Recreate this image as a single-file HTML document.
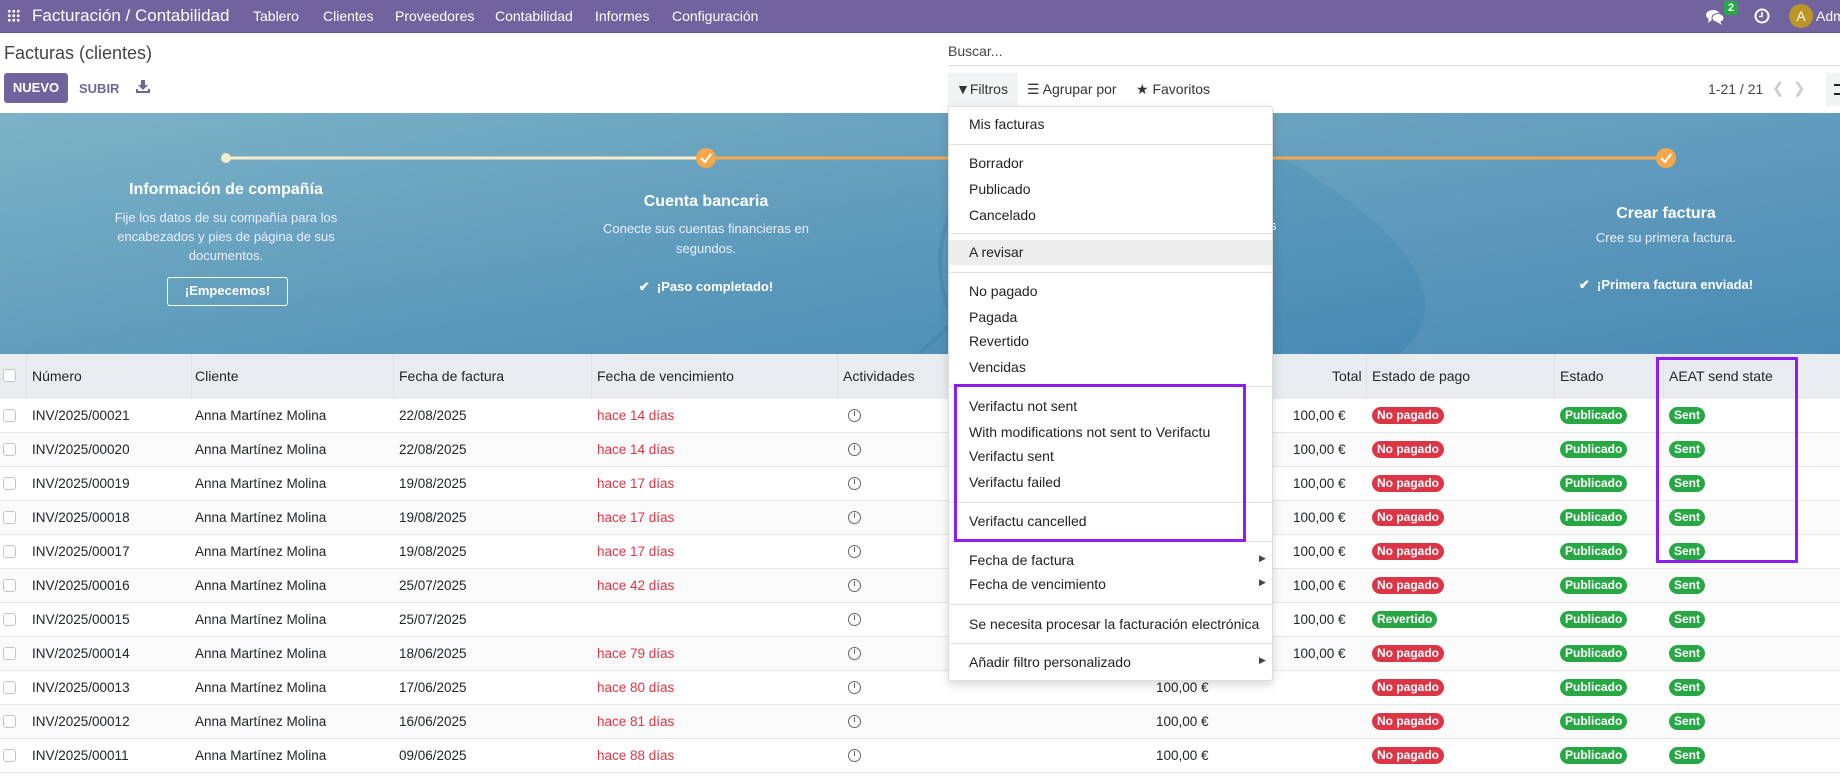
<!DOCTYPE html>
<html><head><meta charset="utf-8">
<style>
*{box-sizing:border-box;margin:0;padding:0}
body{width:1840px;height:776px;overflow:hidden;font-family:"Liberation Sans",sans-serif;font-size:14px;color:#212529;background:#fff;position:relative}
.abs{position:absolute;white-space:nowrap}
.nav{position:absolute;left:0;top:0;width:1840px;height:33px;background:#71639e;border-bottom:1px solid #5f5289;color:#fff}
.nav .abs{top:8px;font-size:14px}
.banner{position:absolute;left:0;top:113px;width:1840px;height:241px;background:linear-gradient(170deg,#7cb2c6 0%,#5f9cbc 45%,#3f84b0 100%);overflow:hidden;color:#fff}
.thead{position:absolute;left:0;top:354px;width:1840px;height:45px;background:#e9ecef}
.th{position:absolute;top:14px;font-size:14px}
.sep{position:absolute;top:0;width:1px;height:45px;background:#dee2e6}
.row{position:absolute;left:0;width:1840px;height:34px;border-bottom:1px solid #e5e5e5;font-size:13.5px}
.row .abs{top:9px}
.cb{position:absolute;left:3px;width:13px;height:13px;border:1px solid #c4c4c4;border-radius:3px;background:#fff}
.badge{position:absolute;top:8px;height:17px;line-height:17px;border-radius:9px;color:#fff;font-weight:bold;font-size:12px;padding:0 5px}
.red{background:#dc3545}.green{background:#28a745}
.clock{position:absolute;top:10px;left:848px;width:13px;height:13px;border:1.5px solid #666;border-radius:50%}
.clock:after{content:"";position:absolute;left:4.5px;top:1px;width:1.5px;height:5px;background:#666}
.dd{position:absolute;left:948px;top:106px;width:325px;height:575px;background:#fff;border:1px solid #ddd;border-radius:3px;box-shadow:0 4px 10px rgba(0,0,0,.15)}
.di{position:absolute;left:20px;font-size:14px;color:#222}
.ds{position:absolute;left:0;width:323px;height:1px;background:#e3e3e3}
.box{position:absolute;border:3px solid #8f1cf0}
</style></head><body>
<div class="nav">
 <div class="abs" style="left:7px;top:9px;width:13px;height:13px;background:
 radial-gradient(circle,#fff 1.3px,transparent 1.6px) 0 0/4.5px 4.5px"></div>
 <div class="abs" style="left:32px;top:6px;font-size:17px">Facturación / Contabilidad</div>
 <div class="abs" style="left:253px">Tablero</div>
 <div class="abs" style="left:323px">Clientes</div>
 <div class="abs" style="left:395px">Proveedores</div>
 <div class="abs" style="left:495px">Contabilidad</div>
 <div class="abs" style="left:595px">Informes</div>
 <div class="abs" style="left:672px">Configuración</div>
 <svg class="abs" style="left:1705px;top:8px" width="20" height="18" viewBox="0 0 20 18"><ellipse cx="8" cy="7" rx="7" ry="5" fill="#fff"/><path d="M4 10 L3 15 L8 11Z" fill="#fff"/><ellipse cx="13" cy="10" rx="6" ry="4.5" fill="#fff" stroke="#71639e" stroke-width="1"/><path d="M15 13 L17 17 L12 14Z" fill="#fff"/></svg>
 <div class="abs" style="left:1724px;top:1px;background:#28a745;font-size:11px;font-weight:bold;padding:1px 4px;border-radius:2px">2</div>
 <svg class="abs" style="left:1753px;top:7px" width="18" height="18" viewBox="0 0 18 18"><circle cx="9" cy="9" r="6.5" fill="none" stroke="#fff" stroke-width="2"/><path d="M9 5v4.5H6" fill="none" stroke="#fff" stroke-width="1.6"/></svg>
 <div class="abs" style="left:1789px;top:4px;width:24px;height:24px;border-radius:50%;background:#bb9626;text-align:center;line-height:24px;font-size:14px">A</div>
 <div class="abs" style="left:1816px">Adm</div>
</div>
<div class="abs" style="left:4px;top:43px;font-size:18px;color:#444">Facturas (clientes)</div>
<div class="abs" style="left:4px;top:73px;width:64px;height:30px;background:#71639e;border-radius:3px;color:#fff;font-size:13px;font-weight:bold;text-align:center;line-height:30px">NUEVO</div>
<div class="abs" style="left:79px;top:81px;font-size:13px;font-weight:bold;color:#71639e">SUBIR</div>
<svg class="abs" style="left:136px;top:80px" width="14" height="13" viewBox="0 0 14 13"><path d="M5 0h4v5h3l-5 5-5-5h3z" fill="#71639e"/><path d="M1 9v3h12V9" fill="none" stroke="#71639e" stroke-width="2"/></svg>
<div class="abs" style="left:948px;top:43px;font-size:14px;color:#444">Buscar...</div>
<div class="abs" style="left:948px;top:65px;width:892px;height:1px;background:#ddd"></div>
<div class="abs" style="left:948px;top:73px;width:70px;height:33px;background:#f2f3f5"></div>
<div class="abs" style="left:956px;top:81px;font-size:14px;color:#333">&#9660;Filtros</div>
<div class="abs" style="left:1027px;top:81px;font-size:14px;color:#333">&#9776; Agrupar por</div>
<div class="abs" style="left:1136px;top:81px;font-size:14px;color:#333">&#9733; Favoritos</div>
<div class="abs" style="left:1708px;top:81px;font-size:14px;color:#444">1-21 / 21</div>
<div class="abs" style="left:1772px;top:79px;font-size:15px;color:#ccc">&#10094;&nbsp;&nbsp;&#10095;</div>
<div class="abs" style="left:1826px;top:73px;width:14px;height:33px;background:#f2f3f5"></div>
<div class="abs" style="left:1834px;top:84px;width:6px;height:11px;border-top:2px solid #222;border-bottom:2px solid #222"></div>

<div class="banner">
 <svg class="abs" style="left:0;top:0" width="1840" height="241">
  <g fill="none" stroke="#2f6a8c" stroke-opacity=".2" stroke-width="4">
   <ellipse cx="1010" cy="150" rx="70" ry="95"/><ellipse cx="1120" cy="40" rx="80" ry="80"/>
   <path d="M1180 -10 Q1050 120 920 240"/></g>
  <path d="M1200 0 Q1500 150 1400 241 L1840 241 L1840 0Z" fill="#fff" fill-opacity=".06"/>
  <line x1="226" y1="45" x2="706" y2="45" stroke="#f5eccc" stroke-width="3"/>
  <line x1="706" y1="45" x2="1666" y2="45" stroke="#f4a84b" stroke-width="3"/>
  <circle cx="226" cy="45" r="5" fill="#f5eccc"/>
  <circle cx="706" cy="45" r="10" fill="#f4a84b"/><circle cx="1666" cy="45" r="10" fill="#f4a84b"/>
  <path d="M701 45l4 4 6-8M1661 45l4 4 6-8" stroke="#fff" stroke-width="2" fill="none"/>
 </svg>
 <div class="abs" style="left:76px;top:68px;width:300px;text-align:center;font-size:16px;font-weight:bold">Información de compañía</div>
 <div class="abs" style="left:96px;top:95px;width:260px;white-space:normal;text-align:center;font-size:13px;line-height:19px;color:#eef">Fije los datos de su compañía para los encabezados y pies de página de sus documentos.</div>
 <div class="abs" style="left:167px;top:164px;width:121px;height:29px;border:1.5px solid #fff;border-radius:3px;text-align:center;line-height:26px;font-size:13px;font-weight:bold">¡Empecemos!</div>
 <div class="abs" style="left:556px;top:80px;width:300px;text-align:center;font-size:16px;font-weight:bold">Cuenta bancaria</div>
 <div class="abs" style="left:586px;top:106px;width:240px;white-space:normal;text-align:center;font-size:13px;line-height:20px;color:#eef">Conecte sus cuentas financieras en segundos.</div>
 <div class="abs" style="left:556px;top:166px;width:300px;text-align:center;font-size:13px;font-weight:bold">&#10004;&nbsp; ¡Paso completado!</div>
 <div class="abs" style="left:1270px;top:105px;font-size:13px">s</div>
 <div class="abs" style="left:1516px;top:92px;width:300px;text-align:center;font-size:16px;font-weight:bold">Crear factura</div>
 <div class="abs" style="left:1516px;top:117px;width:300px;text-align:center;font-size:13px;color:#eef">Cree su primera factura.</div>
 <div class="abs" style="left:1516px;top:164px;width:300px;text-align:center;font-size:13px;font-weight:bold">&#10004;&nbsp; ¡Primera factura enviada!</div>
</div>

<div class="thead">
 <div class="cb" style="top:15px"></div>
 <div class="sep" style="left:26px"></div><div class="sep" style="left:191px"></div><div class="sep" style="left:393px"></div><div class="sep" style="left:591px"></div><div class="sep" style="left:837px"></div><div class="sep" style="left:1366px"></div><div class="sep" style="left:1554px"></div><div class="sep" style="left:1663px"></div>
 <div class="th" style="left:32px">Número</div><div class="th" style="left:195px">Cliente</div><div class="th" style="left:399px">Fecha de factura</div><div class="th" style="left:597px">Fecha de vencimiento</div><div class="th" style="left:843px">Actividades</div><div class="th" style="left:1332px">Total</div><div class="th" style="left:1372px">Estado de pago</div><div class="th" style="left:1560px">Estado</div><div class="th" style="left:1669px">AEAT send state</div>
</div>

<div class="row" style="top:399px"><div class="cb" style="top:10px"></div><div class="abs" style="left:32px">INV/2025/00021</div><div class="abs" style="left:195px">Anna Martínez Molina</div><div class="abs" style="left:399px">22/08/2025</div><div class="abs" style="left:597px;color:#dc3545">hace 14 días</div><div class="clock"></div><div class="abs" style="left:1293px">100,00 €</div><div class="badge red" style="left:1372px">No pagado</div><div class="badge green" style="left:1560px">Publicado</div><div class="badge green" style="left:1669px">Sent</div></div>
<div class="row" style="top:433px;background:#fafafa"><div class="cb" style="top:10px"></div><div class="abs" style="left:32px">INV/2025/00020</div><div class="abs" style="left:195px">Anna Martínez Molina</div><div class="abs" style="left:399px">22/08/2025</div><div class="abs" style="left:597px;color:#dc3545">hace 14 días</div><div class="clock"></div><div class="abs" style="left:1293px">100,00 €</div><div class="badge red" style="left:1372px">No pagado</div><div class="badge green" style="left:1560px">Publicado</div><div class="badge green" style="left:1669px">Sent</div></div>
<div class="row" style="top:467px"><div class="cb" style="top:10px"></div><div class="abs" style="left:32px">INV/2025/00019</div><div class="abs" style="left:195px">Anna Martínez Molina</div><div class="abs" style="left:399px">19/08/2025</div><div class="abs" style="left:597px;color:#dc3545">hace 17 días</div><div class="clock"></div><div class="abs" style="left:1293px">100,00 €</div><div class="badge red" style="left:1372px">No pagado</div><div class="badge green" style="left:1560px">Publicado</div><div class="badge green" style="left:1669px">Sent</div></div>
<div class="row" style="top:501px;background:#fafafa"><div class="cb" style="top:10px"></div><div class="abs" style="left:32px">INV/2025/00018</div><div class="abs" style="left:195px">Anna Martínez Molina</div><div class="abs" style="left:399px">19/08/2025</div><div class="abs" style="left:597px;color:#dc3545">hace 17 días</div><div class="clock"></div><div class="abs" style="left:1293px">100,00 €</div><div class="badge red" style="left:1372px">No pagado</div><div class="badge green" style="left:1560px">Publicado</div><div class="badge green" style="left:1669px">Sent</div></div>
<div class="row" style="top:535px"><div class="cb" style="top:10px"></div><div class="abs" style="left:32px">INV/2025/00017</div><div class="abs" style="left:195px">Anna Martínez Molina</div><div class="abs" style="left:399px">19/08/2025</div><div class="abs" style="left:597px;color:#dc3545">hace 17 días</div><div class="clock"></div><div class="abs" style="left:1293px">100,00 €</div><div class="badge red" style="left:1372px">No pagado</div><div class="badge green" style="left:1560px">Publicado</div><div class="badge green" style="left:1669px">Sent</div></div>
<div class="row" style="top:569px;background:#fafafa"><div class="cb" style="top:10px"></div><div class="abs" style="left:32px">INV/2025/00016</div><div class="abs" style="left:195px">Anna Martínez Molina</div><div class="abs" style="left:399px">25/07/2025</div><div class="abs" style="left:597px;color:#dc3545">hace 42 días</div><div class="clock"></div><div class="abs" style="left:1293px">100,00 €</div><div class="badge red" style="left:1372px">No pagado</div><div class="badge green" style="left:1560px">Publicado</div><div class="badge green" style="left:1669px">Sent</div></div>
<div class="row" style="top:603px"><div class="cb" style="top:10px"></div><div class="abs" style="left:32px">INV/2025/00015</div><div class="abs" style="left:195px">Anna Martínez Molina</div><div class="abs" style="left:399px">25/07/2025</div><div class="clock"></div><div class="abs" style="left:1293px">100,00 €</div><div class="badge green" style="left:1372px">Revertido</div><div class="badge green" style="left:1560px">Publicado</div><div class="badge green" style="left:1669px">Sent</div></div>
<div class="row" style="top:637px;background:#fafafa"><div class="cb" style="top:10px"></div><div class="abs" style="left:32px">INV/2025/00014</div><div class="abs" style="left:195px">Anna Martínez Molina</div><div class="abs" style="left:399px">18/06/2025</div><div class="abs" style="left:597px;color:#dc3545">hace 79 días</div><div class="clock"></div><div class="abs" style="left:1293px">100,00 €</div><div class="badge red" style="left:1372px">No pagado</div><div class="badge green" style="left:1560px">Publicado</div><div class="badge green" style="left:1669px">Sent</div></div>
<div class="row" style="top:671px"><div class="cb" style="top:10px"></div><div class="abs" style="left:32px">INV/2025/00013</div><div class="abs" style="left:195px">Anna Martínez Molina</div><div class="abs" style="left:399px">17/06/2025</div><div class="abs" style="left:597px;color:#dc3545">hace 80 días</div><div class="clock"></div><div class="abs" style="left:1156px">100,00 €</div><div class="badge red" style="left:1372px">No pagado</div><div class="badge green" style="left:1560px">Publicado</div><div class="badge green" style="left:1669px">Sent</div></div>
<div class="row" style="top:705px;background:#fafafa"><div class="cb" style="top:10px"></div><div class="abs" style="left:32px">INV/2025/00012</div><div class="abs" style="left:195px">Anna Martínez Molina</div><div class="abs" style="left:399px">16/06/2025</div><div class="abs" style="left:597px;color:#dc3545">hace 81 días</div><div class="clock"></div><div class="abs" style="left:1156px">100,00 €</div><div class="badge red" style="left:1372px">No pagado</div><div class="badge green" style="left:1560px">Publicado</div><div class="badge green" style="left:1669px">Sent</div></div>
<div class="row" style="top:739px"><div class="cb" style="top:10px"></div><div class="abs" style="left:32px">INV/2025/00011</div><div class="abs" style="left:195px">Anna Martínez Molina</div><div class="abs" style="left:399px">09/06/2025</div><div class="abs" style="left:597px;color:#dc3545">hace 88 días</div><div class="clock"></div><div class="abs" style="left:1156px">100,00 €</div><div class="badge red" style="left:1372px">No pagado</div><div class="badge green" style="left:1560px">Publicado</div><div class="badge green" style="left:1669px">Sent</div></div>

<div class="dd">
 <div class="di" style="top:9px">Mis facturas</div>
 <div class="ds" style="top:37px"></div>
 <div class="di" style="top:48px">Borrador</div>
 <div class="di" style="top:74px">Publicado</div>
 <div class="di" style="top:100px">Cancelado</div>
 <div class="ds" style="top:126px"></div>
 <div class="abs" style="left:0;top:133px;width:323px;height:25px;background:#ededed"></div>
 <div class="di" style="top:137px">A revisar</div>
 <div class="ds" style="top:165px"></div>
 <div class="di" style="top:176px">No pagado</div>
 <div class="di" style="top:202px">Pagada</div>
 <div class="di" style="top:226px">Revertido</div>
 <div class="di" style="top:252px">Vencidas</div>
 <div class="ds" style="top:279px"></div>
 <div class="di" style="top:291px">Verifactu not sent</div>
 <div class="di" style="top:317px">With modifications not sent to Verifactu</div>
 <div class="di" style="top:341px">Verifactu sent</div>
 <div class="di" style="top:367px">Verifactu failed</div>
 <div class="ds" style="top:395px"></div>
 <div class="di" style="top:406px">Verifactu cancelled</div>
 <div class="ds" style="top:434px"></div>
 <div class="di" style="top:445px">Fecha de factura</div><div class="abs" style="left:310px;top:446px;font-size:9px;color:#444">&#9654;</div>
 <div class="di" style="top:469px">Fecha de vencimiento</div><div class="abs" style="left:310px;top:470px;font-size:9px;color:#444">&#9654;</div>
 <div class="ds" style="top:497px"></div>
 <div class="di" style="top:509px">Se necesita procesar la facturación electrónica</div>
 <div class="ds" style="top:536px"></div>
 <div class="di" style="top:547px">Añadir filtro personalizado</div><div class="abs" style="left:310px;top:548px;font-size:9px;color:#444">&#9654;</div>
</div>
<div class="box" style="left:954px;top:384px;width:292px;height:158px"></div>
<div class="box" style="left:1656px;top:357px;width:142px;height:206px"></div>
</body></html>
